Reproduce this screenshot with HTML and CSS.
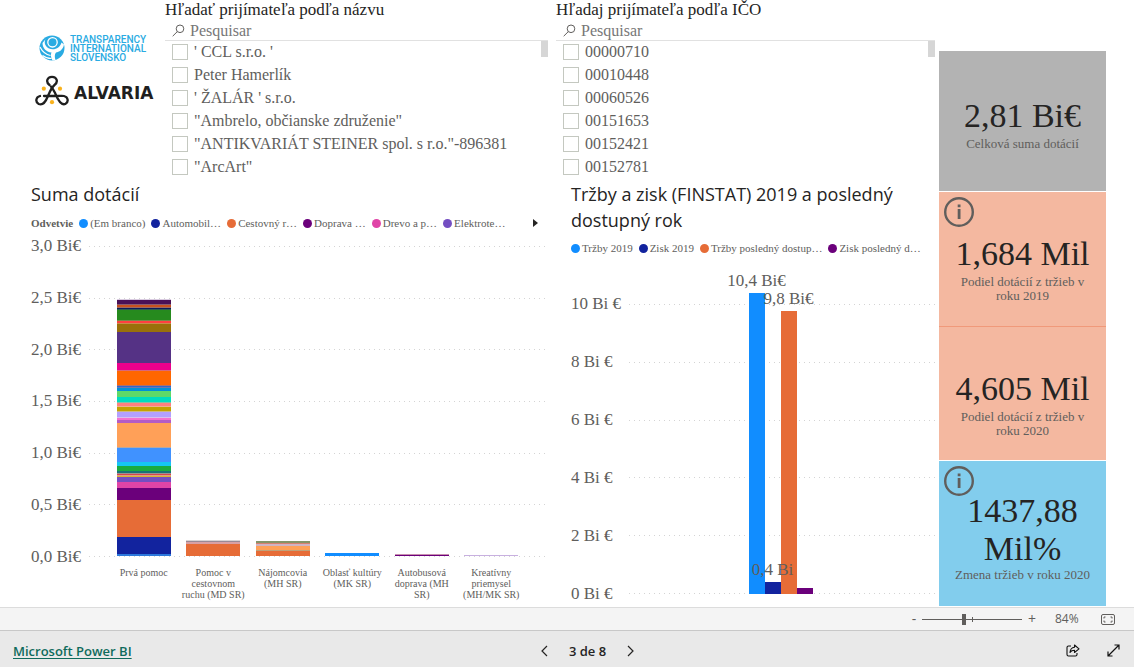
FILE: index.html
```html
<!DOCTYPE html>
<html lang="sk">
<head>
<meta charset="utf-8">
<meta name="viewport" content="width=device-width, initial-scale=1">
<title>Microsoft Power BI</title>
<link rel="stylesheet" href="styles.css">
</head>
<body>
<div class="app">
<main class="report">
  <div class="main">
    <section class="filters">
      <div class="logos">
        <div class="logo-ti">
          <svg width="26" height="26" viewBox="0 0 26 26" aria-hidden="true">
            <circle cx="13" cy="13" r="12.500" fill="#2aabe2"/>
            <path d="M7.500 3C4.500 6 5.500 11 9.500 13.200C15 16 21 13 22.500 7.500L25 9.500C24 15 20 17 17 17.500C15.500 19.500 15.500 22 16.500 25L13.500 25.500C11.500 22 11.500 19 12.500 17.500C7 17 3.500 13 3.500 8Z" fill="#fff"/>
            <circle cx="13.500" cy="7.300" r="4.700" fill="#2aabe2" stroke="#fff" stroke-width="1.300"/>
            <path d="M1 12C3 16 6.500 19.500 11.500 20.500M3.500 20.500C6 22.500 9 23.500 12.500 23.500" fill="none" stroke="#fff" stroke-width="1.200"/>
          </svg>
          <p class="ti-name">TRANSPARENCY<br>INTERNATIONAL<br>SLOVENSKO</p>
        </div>
        <div class="logo-alvaria">
          <svg width="34" height="32" viewBox="0 0 34 32" aria-hidden="true">
            <g fill="none" stroke="#1f1f1f" stroke-width="2.300" stroke-linecap="round">
              <path d="M14.500 10C10.500 7 12 1.800 17 1.800S23.500 7 19.500 10C17 12 16.500 13 15 16.500L12.500 22C10.500 27 7.500 30.500 3.700 29C0 27 .8 22 5 21"/>
              <path d="M16 11.500C18 13.500 18.500 15 20.500 19C23 25 26.500 30.500 30.300 29C34 27 33.200 22 29 21C27 20.500 25 21 21.500 21H9"/>
            </g>
            <g fill="#f9b21d"><circle cx="8.800" cy="13.700" r="2.100"/><circle cx="25" cy="13.700" r="2.100"/><circle cx="17" cy="27.200" r="2.100"/></g>
          </svg>
          <span class="alvaria-name">ALVARIA</span>
        </div>
      </div>

      <div class="slicer">
        <h2 class="slicer-title">Hľadať prijímateľa podľa názvu</h2>
        <label class="search">
          <svg width="13" height="13" viewBox="0 0 13 13" aria-hidden="true"><circle cx="8" cy="4.800" r="3.800"/><path d="M5.300 7.600L.7 12.200"/></svg>
          <input type="text" placeholder="Pesquisar" aria-label="Pesquisar">
        </label>
        <div class="options">
          <label><input type="checkbox">' CCL s.r.o. '</label>
          <label><input type="checkbox">Peter Hamerlík</label>
          <label><input type="checkbox">' ŽALÁR ' s.r.o.</label>
          <label><input type="checkbox">"Ambrelo, občianske združenie"</label>
          <label><input type="checkbox">"ANTIKVARIÁT STEINER spol. s r.o."-896381</label>
          <label><input type="checkbox">"ArcArt"</label>
          <span class="scroll-thumb"></span>
        </div>
      </div>

      <div class="slicer">
        <h2 class="slicer-title">Hľadaj prijímateľa podľa IČO</h2>
        <label class="search">
          <svg width="13" height="13" viewBox="0 0 13 13" aria-hidden="true"><circle cx="8" cy="4.800" r="3.800"/><path d="M5.300 7.600L.7 12.200"/></svg>
          <input type="text" placeholder="Pesquisar" aria-label="Pesquisar">
        </label>
        <div class="options">
          <label><input type="checkbox">00000710</label>
          <label><input type="checkbox">00010448</label>
          <label><input type="checkbox">00060526</label>
          <label><input type="checkbox">00151653</label>
          <label><input type="checkbox">00152421</label>
          <label><input type="checkbox">00152781</label>
          <span class="scroll-thumb"></span>
        </div>
      </div>
    </section>

    <section class="charts">
      <article class="chart chart-sum">
        <h2 class="chart-title">Suma dotácií</h2>
        <div class="legend">
          <b>Odvetvie</b>
          <span class="key blue">(Em branco)</span>
          <span class="key navy">Automobil…</span>
          <span class="key orange">Cestovný r…</span>
          <span class="key purple">Doprava …</span>
          <span class="key pink">Drevo a p…</span>
          <span class="key violet">Elektrote…</span>
          <button class="legend-next" type="button" aria-label="Ďalej"><svg width="5" height="8" viewBox="0 0 5 8"><path d="M0 0L5 4L0 8Z" fill="#252423"/></svg></button>
        </div>
        <div class="plot plot-sum">
          <div class="axis"><span>3,0 Bi€</span><span>2,5 Bi€</span><span>2,0 Bi€</span><span>1,5 Bi€</span><span>1,0 Bi€</span><span>0,5 Bi€</span><span>0,0 Bi€</span></div>
          <div class="lines"><i></i><i></i><i></i><i></i><i></i><i></i><i></i></div>
          <div class="columns">
            <svg width="54" height="257" viewBox="0 299 54 257" shape-rendering="crispEdges">
              <rect y="299" width="54" height="1" fill="#d9cbe0"/>
              <rect y="300" width="54" height="4" fill="#4a1057"/>
              <rect y="304" width="54" height="1" fill="#8a5a70"/>
              <rect y="305" width="54" height="2" fill="#c8501e"/>
              <rect y="307" width="54" height="1" fill="#9c6a60"/>
              <rect y="308" width="54" height="1" fill="#0f1a5a"/>
              <rect y="309" width="54" height="1" fill="#2c5a50"/>
              <rect y="310" width="54" height="10" fill="#268a1e"/>
              <rect y="320" width="54" height="1" fill="#758a48"/>
              <rect y="321" width="54" height="2" fill="#ff3f3f"/>
              <rect y="323" width="54" height="1" fill="#cc8a4a"/>
              <rect y="324" width="54" height="8" fill="#99700a"/>
              <rect y="332" width="54" height="31" fill="#553285"/>
              <rect y="363" width="54" height="7" fill="#ec008c"/>
              <rect y="370" width="54" height="1" fill="#d9667a"/>
              <rect y="371" width="54" height="14" fill="#ff6600"/>
              <rect y="385" width="54" height="1" fill="#b0706a"/>
              <rect y="386" width="54" height="1" fill="#3366cc"/>
              <rect y="387" width="54" height="1" fill="#6678b0"/>
              <rect y="388" width="54" height="3" fill="#0090d9"/>
              <rect y="391" width="54" height="6" fill="#5fd969"/>
              <rect y="397" width="54" height="5" fill="#00dcc0"/>
              <rect y="402" width="54" height="1" fill="#84c0a8"/>
              <rect y="403" width="54" height="3" fill="#ff8080"/>
              <rect y="406" width="54" height="1" fill="#f0b090"/>
              <rect y="407" width="54" height="4" fill="#c4a200"/>
              <rect y="411" width="54" height="1" fill="#cdb888"/>
              <rect y="412" width="54" height="5" fill="#b3a0ff"/>
              <rect y="417" width="54" height="1" fill="#d9c0f0"/>
              <rect y="418" width="54" height="2" fill="#f472d0"/>
              <rect y="420" width="54" height="3" fill="#b45cc4"/>
              <rect y="423" width="54" height="24" fill="#ffa058"/>
              <rect y="447" width="54" height="1" fill="#b8a8a0"/>
              <rect y="448" width="54" height="14" fill="#4092ff"/>
              <rect y="462" width="54" height="4" fill="#15c6f4"/>
              <rect y="466" width="54" height="5" fill="#1aab40"/>
              <rect y="471" width="54" height="2" fill="#197278"/>
              <rect y="473" width="54" height="1" fill="#a09090"/>
              <rect y="474" width="54" height="1" fill="#d64550"/>
              <rect y="475" width="54" height="1" fill="#e0a080"/>
              <rect y="476" width="54" height="1" fill="#d9b330"/>
              <rect y="477" width="54" height="5" fill="#744ec2"/>
              <rect y="482" width="54" height="6" fill="#e044a7"/>
              <rect y="488" width="54" height="12" fill="#6b007b"/>
              <rect y="500" width="54" height="37" fill="#e66c37"/>
              <rect y="537" width="54" height="17" fill="#12239e"/>
              <rect y="554" width="54" height="2" fill="#2d78dc"/>
            </svg>
            <svg width="54" height="16" viewBox="0 0 54 16" shape-rendering="crispEdges">
              <rect width="54" height="1" fill="#d8d4d6"/><rect y="1" width="54" height="1" fill="#9a8a96"/><rect y="2" width="54" height="2" fill="#d8a0a4"/><rect y="4" width="54" height="12" fill="#e66c37"/>
            </svg>
            <svg width="54" height="15" viewBox="0 0 54 15" shape-rendering="crispEdges">
              <rect width="54" height="2" fill="#869468"/><rect y="2" width="54" height="1" fill="#d88070"/><rect y="3" width="54" height="2" fill="#d0b4c4"/><rect y="5" width="54" height="4" fill="#ffa058"/><rect y="9" width="54" height="1" fill="#c0a078"/><rect y="10" width="54" height="5" fill="#e66c37"/>
            </svg>
            <svg width="54" height="3" viewBox="0 0 54 3" shape-rendering="crispEdges"><rect width="54" height="3" fill="#118dff"/></svg>
            <svg width="54" height="2" viewBox="0 0 54 2" shape-rendering="crispEdges"><rect width="54" height="1" fill="#c890b0"/><rect y="1" width="54" height="1" fill="#6b007b"/></svg>
            <svg width="54" height="1" viewBox="0 0 54 1" shape-rendering="crispEdges"><rect width="54" height="1" fill="#c8b0e0"/></svg>
          </div>
        </div>
        <div class="categories">
          <span>Prvá pomoc</span><span>Pomoc v cestovnom ruchu (MD SR)</span><span>Nájomcovia (MH SR)</span><span>Oblasť kultúry (MK SR)</span><span>Autobusová doprava (MH SR)</span><span>Kreatívny priemysel (MH/MK SR)</span>
        </div>
      </article>

      <article class="chart chart-sales">
        <h2 class="chart-title">Tržby a zisk (FINSTAT) 2019 a posledný dostupný rok</h2>
        <div class="legend">
          <span class="key blue">Tržby 2019</span>
          <span class="key navy">Zisk 2019</span>
          <span class="key orange">Tržby posledný dostup…</span>
          <span class="key purple">Zisk posledný d…</span>
        </div>
        <div class="plot plot-sales">
          <div class="axis"><span>10 Bi €</span><span>8 Bi €</span><span>6 Bi €</span><span>4 Bi €</span><span>2 Bi €</span><span>0 Bi €</span></div>
          <div class="lines"><i></i><i></i><i></i><i></i><i></i><i></i></div>
          <div class="group">
            <div class="bar"><span>10,4 Bi€</span><div class="fill blue" style="height:301px"></div></div>
            <div class="bar"><span>0,4 Bi</span><div class="fill navy" style="height:12px"></div></div>
            <div class="bar"><span>9,8 Bi€</span><div class="fill orange" style="height:283px"></div></div>
            <div class="bar"><div class="fill purple" style="height:6px"></div></div>
          </div>
        </div>
      </article>
    </section>
  </div>

  <aside class="cards">
    <div class="card total"><p class="value">2,81 Bi€</p><p class="caption">Celková suma dotácií</p></div>
    <div class="card share">
      <svg class="info" width="30" height="30" viewBox="0 0 30 30"><circle cx="15" cy="15" r="13.800" fill="none" stroke="#605e5c" stroke-width="2.400"/><path d="M13.700 7.500h2.800v2.700h-2.800zM13.700 12h2.800v10h-2.800z" fill="#605e5c"/></svg>
      <p class="value">1,684 Mil</p><p class="caption">Podiel dotácií z tržieb v roku 2019</p></div>
    <div class="card share share-next"><p class="value">4,605 Mil</p><p class="caption">Podiel dotácií z tržieb v roku 2020</p></div>
    <div class="card change">
      <svg class="info" width="30" height="30" viewBox="0 0 30 30"><circle cx="15" cy="15" r="13.800" fill="none" stroke="#605e5c" stroke-width="2.400"/><path d="M13.700 7.500h2.800v2.700h-2.800zM13.700 12h2.800v10h-2.800z" fill="#605e5c"/></svg>
      <p class="value">1437,88 Mil%</p><p class="caption">Zmena tržieb v roku 2020</p></div>
  </aside>
</main>

<div class="zoom-bar">
  <button type="button" class="zoom-step" aria-label="Zmenšiť">-</button>
  <input class="zoom-range" type="range" min="0" max="100" value="42" aria-label="Lupa">
  <button type="button" class="zoom-step" aria-label="Zväčšiť">+</button>
  <span class="zoom-value">84%</span>
  <button type="button" class="icon-button" aria-label="Prispôsobiť strane">
    <svg width="14" height="11" viewBox="0 0 14 11" fill="none" stroke="#605e5c"><rect x=".5" y=".5" width="13" height="10" rx="1.500"/><path d="M3 4.500V3h1.500M9.500 3H11v1.500M11 6.500V8H9.500M4.500 8H3V6.500"/></svg>
  </button>
</div>

<footer class="footer">
  <a class="brand" href="#">Microsoft Power BI</a>
  <nav class="pager">
    <button type="button" class="icon-button" aria-label="Predchádzajúca"><svg width="7" height="12" viewBox="0 0 7 12" fill="none" stroke="#252423" stroke-width="1.200"><path d="M6 1L1 6L6 11"/></svg></button>
    <span>3 de 8</span>
    <button type="button" class="icon-button" aria-label="Nasledujúca"><svg width="7" height="12" viewBox="0 0 7 12" fill="none" stroke="#252423" stroke-width="1.200"><path d="M1 1L6 6L1 11"/></svg></button>
  </nav>
  <div class="actions">
    <button type="button" class="icon-button" aria-label="Zdieľať"><svg width="14" height="13" viewBox="0 0 14 13" fill="none" stroke="#111" stroke-width="1.100" stroke-linejoin="round"><path d="M5 2H2.500Q1 2 1 3.500V10.500Q1 12 2.500 12H9.500Q11 12 11 10.500V9"/><path d="M8.500 1L13 4.800L8.500 8.500V6.300C6 6.300 4.800 7.200 4 8.500C4.200 5.500 5.800 3.400 8.500 3.200Z"/></svg></button>
    <button type="button" class="icon-button" aria-label="Na celú obrazovku"><svg width="13" height="13" viewBox="0 0 13 13" fill="none" stroke="#111" stroke-width="1.200"><path d="M1 12L12 1M7.500 1H12V5.500M1 7.500V12H5.500"/></svg></button>
  </div>
</footer>
</div>
</body>
</html>
```
FILE: styles.css
```css
* { box-sizing: border-box; }
body { margin: 0; background: #fff; color: #252423; font-family: "Liberation Serif", serif; font-size: 16px; }
h2, p { margin: 0; font-weight: 400; }
button { padding: 0; border: 0; background: none; color: inherit; font: inherit; cursor: pointer; }
svg { display: block; }

.app { display: flex; flex-direction: column; min-height: 100vh; }
.report { display: flex; flex: 1; padding-right: 28px; }
.main { flex: 1; min-width: 0; }

.filters { display: grid; grid-template-columns: 157px 383fr 379fr; gap: 8px; padding-right: 4px; padding-bottom: 3px; }
.logos { display: flex; flex-direction: column; gap: 14px; padding: 35px 0 0 35px; }
.logo-ti { display: flex; align-items: center; gap: 5px; height: 26px; padding-left: 4px; }
.ti-name { color: #2aabe2; font: 500 10px/9px Roboto, sans-serif; white-space: nowrap; }
.logo-alvaria { display: flex; align-items: center; gap: 5px; }
.alvaria-name { padding-top: 4px; font: 700 17px/20px "DejaVu Sans", sans-serif; color: #1f1f1f; }

.slicer-title { font-size: 17px; line-height: 20px; white-space: nowrap; }
.search { display: flex; align-items: center; gap: 5px; height: 21px; padding: 0 7px; border-bottom: 1px solid #e1e1e1; }
.search svg { flex: none; fill: none; stroke: #605e5c; }
.search input { flex: 1; min-width: 0; padding: 1px 0 0; border: 0; outline: 0; background: none; color: #605e5c; font: inherit; line-height: 20px; }
.search input::placeholder { color: #777; }
.options { position: relative; display: grid; grid-template-rows: repeat(6, 1fr); height: 137px; padding-left: 7px; color: #605e5c; }
.options label { display: flex; align-items: center; gap: 6px; white-space: nowrap; }
.options input { appearance: none; width: 16px; height: 16px; margin: 0; border: 1px solid #c4c8c0; background: #fff; }
.scroll-thumb { position: absolute; top: 0; right: 0; width: 7px; height: 16px; background: #d6d6d6; }

.charts { display: grid; grid-template-columns: 556fr 383fr; }
.chart-sum { padding: 0 10px 0 31px; }
.chart-sales { padding: 0 4px 0 15px; }
.chart-title { font: 400 18px/26px "Open Sans", sans-serif; }
.legend { display: flex; align-items: center; gap: 6px; height: 16px; color: #605e5c; font-size: 11px; white-space: nowrap; }
.chart-sum .legend { margin: 8px 0 5px; }
.chart-sales .legend { margin: 7px 0 15px; }
.key { display: flex; align-items: center; gap: 2px; }
.key::before { content: ""; width: 9px; height: 9px; border-radius: 50%; background: var(--c); }
.blue { --c: #118dff; }
.navy { --c: #12239e; }
.orange { --c: #e66c37; }
.purple { --c: #6b007b; }
.pink { --c: #e044a7; }
.violet { --c: #744ec2; }
.legend-next { margin-left: auto; margin-right: 8px; }

.plot { display: grid; grid-template-columns: 50px 1fr; column-gap: 8px; }
.plot-sum { height: 331px; }
.plot-sales { height: 332px; }
.axis, .lines { grid-row: 1; display: flex; flex-direction: column; justify-content: space-between; }
.axis { color: #605e5c; font-size: 17px; line-height: 20px; white-space: nowrap; }
.lines { grid-column: 2; padding: 10px 0; }
.lines i { height: 1px; background: repeating-linear-gradient(90deg, #d4d4d4 0 1px, transparent 1px 5px); }
.plot-sales .axis, .plot-sales .lines { margin-top: 23px; }
.columns { grid-area: 1 / 2; display: grid; grid-template-columns: repeat(6, 1fr); align-items: end; justify-items: center; padding: 0 20px 11px; }
.categories { display: grid; grid-template-columns: repeat(6, 1fr); padding: 0 20px 0 78px; color: #605e5c; font-size: 10px; line-height: 11px; text-align: center; }
.categories span { padding: 0 2px; }
.group { grid-area: 1 / 2; display: flex; justify-content: center; align-items: flex-end; padding: 0 3px 10px 0; }
.bar { display: flex; flex-direction: column; align-items: center; width: 16px; }
.bar span { position: relative; z-index: 1; margin-bottom: 2px; color: #605e5c; font-size: 17px; line-height: 20px; white-space: nowrap; }
.fill { width: 100%; background: var(--c); }

.cards { display: grid; grid-template-rows: 140fr 134fr 133fr 145fr; row-gap: 1px; flex: none; width: 167px; padding: 51px 0 1px; }
.card { position: relative; display: flex; flex-direction: column; justify-content: center; gap: 2px; padding: 6px 13px 0; text-align: center; }
.value { font-size: 34px; line-height: 38px; }
.caption { color: #605e5c; font-size: 13px; line-height: 14px; }
.total { background: #b3b3b3; }
.share { padding-top: 20px; background: #f4b8a0; }
.share-next { box-shadow: 0 -1px #f0997a; }
.change { gap: 0; background: #82cded; }
.info { position: absolute; top: 5px; left: 5px; }

.zoom-bar { display: flex; align-items: center; justify-content: flex-end; height: 23px; padding-right: 19px; border-top: 1px solid #dcdcdc; background: #f4f4f4; color: #605e5c; font: 12px/16px "Open Sans", sans-serif; }
.zoom-step { width: 10px; font-size: 14px; }
.zoom-range { appearance: none; width: 100px; height: 11px; margin: 0 5px 0 3px; background: linear-gradient(#605e5c, #605e5c) 50% 5px / 100% 1px no-repeat, linear-gradient(#605e5c, #605e5c) 50% 50% / 1px 5px no-repeat; }
.zoom-range::-webkit-slider-thumb { appearance: none; width: 4px; height: 11px; background: #605e5c; }
.zoom-value { width: 24px; margin: 0 22px 0 18px; }

.footer { display: grid; grid-template-columns: 1fr auto 1fr; align-items: center; height: 37px; padding: 3px 14px 0 13px; border-top: 1px solid #c8c8c8; background: #e9e9e9; font: 600 13px/18px "Open Sans", sans-serif; color: #252423; }
.brand { justify-self: start; color: #0f6b5c; text-underline-offset: 2px; }
.pager { display: flex; align-items: center; gap: 21px; margin-left: 42px; }
.actions { display: flex; align-items: center; justify-content: flex-end; gap: 27px; }
```
